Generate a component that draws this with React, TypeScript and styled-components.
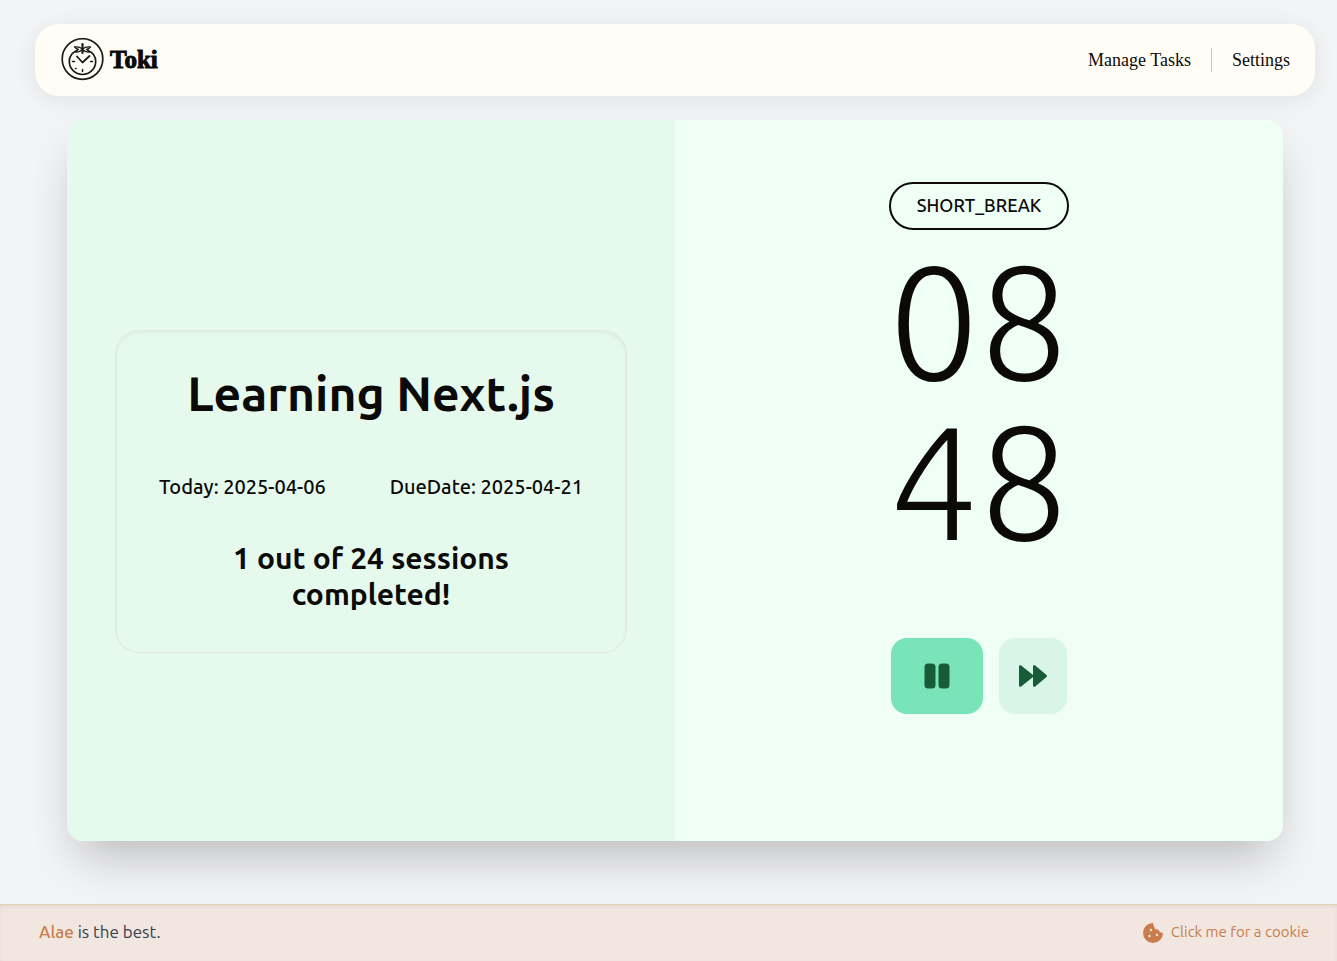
import React from "react";
import styled, { createGlobalStyle } from "styled-components";

const GlobalStyle = createGlobalStyle`
  * { box-sizing: border-box; }
  body {
    margin: 0;
    background: #f3f4f6;
    color: #0c0a09;
    font-family: Ubuntu, "Open Sans", "Noto Sans", sans-serif;
  }
  h1, h2, p { margin: 0; }
`;

const Page = styled.div`
  display: flex;
  flex-direction: column;
  min-height: 100vh;
`;

const Content = styled.div`
  flex: 1;
  display: flex;
  flex-direction: column;
  margin: 0 22px 0 35px;
  padding-top: 24px;
`;

const Header = styled.header`
  display: flex;
  align-items: center;
  justify-content: space-between;
  height: 72px;
  padding: 0 25px 0 26px;
  border-radius: 24px;
  background: #fffdf5;
  box-shadow: 0 4px 24px rgba(0, 0, 0, 0.08);
`;

const Brand = styled.a`
  display: flex;
  align-items: center;
  gap: 6px;
  color: #0c0a09;
  font: 700 25px/32px "Liberation Serif", serif;
  text-decoration: none;
  -webkit-text-stroke: 1px #0c0a09;
`;

const Nav = styled.nav`
  display: flex;
  align-items: center;
  gap: 20px;
`;

const NavLink = styled.a`
  color: #0c0a09;
  font: 18px/24px "Liberation Serif", serif;
  text-decoration: none;
`;

const Divider = styled.span`
  width: 1px;
  height: 24px;
  background: #c9c8c4;
`;

const Main = styled.main`
  flex: 1;
  display: flex;
  overflow: hidden;
  padding: 24px 32px 63px;
`;

const Card = styled.div`
  flex: 1;
  display: grid;
  grid-template-columns: 1fr 1fr;
  border-radius: 16px;
  box-shadow: 0 25px 50px -12px rgba(0, 0, 0, 0.25);
`;

const TaskPanel = styled.section`
  display: flex;
  align-items: center;
  padding: 22px 48px 0;
  border-radius: 16px 0 0 16px;
  background: #e5faed;
`;

const TaskBox = styled.div`
  flex: 1;
  display: flex;
  flex-direction: column;
  align-items: center;
  gap: 32px;
  padding: 32px 40px 40px;
  border: 1px solid #e3e4e1;
  border-radius: 24px;
  box-shadow: inset 0 2px 4px rgba(0, 0, 0, 0.05);
  text-align: center;
`;

const Title = styled.h1`
  font-size: 48px;
  font-weight: 600;
  line-height: 60px;
`;

const Dates = styled.div`
  display: flex;
  justify-content: space-between;
  gap: 64px;
  padding: 18px 0 7px;
  font-size: 20px;
  font-weight: 550;
  line-height: 28px;
`;

const Progress = styled.h2`
  max-width: 320px;
  font-size: 30px;
  font-weight: 600;
  line-height: 36px;
`;

const TimerPanel = styled.section`
  display: flex;
  flex-direction: column;
  align-items: center;
  padding: 62px 48px 48px;
  border-radius: 0 16px 16px 0;
  background: #effff5;
`;

const Mode = styled.p`
  padding: 7px 26px 9px;
  border: 2px solid #0c0a09;
  border-radius: 24px;
  font-size: 18px;
  font-weight: 500;
  line-height: 28px;
`;

const Clock = styled.div`
  display: flex;
  flex-direction: column;
  padding: 11px 0 77px;
  font-size: 160px;
  font-weight: 300;
  line-height: 160px;
`;

const Controls = styled.div`
  display: flex;
  gap: 16px;
`;

const ControlButton = styled.button<{ $primary?: boolean }>`
  display: flex;
  align-items: center;
  justify-content: center;
  width: ${(p) => (p.$primary ? 92 : 68)}px;
  height: 76px;
  padding: 0;
  border: 0;
  border-radius: 16px;
  background: ${(p) => (p.$primary ? "#79e4b7" : "#d9f4e8")};
  color: #185c37;
`;

const Footer = styled.footer`
  display: flex;
  align-items: center;
  justify-content: space-between;
  height: 57px;
  padding: 0 28px 0 39px;
  border-top: 1px solid #e2d0ba;
  background: #f1e6e0;
  box-shadow: inset 0 2px 4px rgba(0, 0, 0, 0.05);
  color: #374151;
  font-size: 17px;
  line-height: 24px;
`;

const Credit = styled.p`
  padding-bottom: 2px;
`;

const Name = styled.span`
  color: #c97d4c;
  font-weight: 500;
`;

const CookieButton = styled.button`
  display: flex;
  align-items: center;
  gap: 8px;
  padding: 0;
  border: 0;
  background: none;
  color: #c97d4c;
  font-family: inherit;
  font-size: 15px;
  line-height: 24px;
`;

const CookieLabel = styled.span`
  padding-bottom: 2px;
`;

function TomatoClock() {
  return (
    <svg width="43" height="44" viewBox="0 0 43 44" fill="none" stroke="#1c1b1a" strokeLinecap="round" strokeLinejoin="round" aria-hidden="true">
      <circle cx="21.5" cy="21" r="20.300" strokeWidth="1.700" />
      <path d="M16 12.500C11 14.500 8.300 18.500 8.300 23.500a13.200 13 0 0 0 26.400 0c0-5-2.700-9-7.700-11" strokeWidth="1.700" />
      <path d="M21.500 6v9" strokeWidth="2.200" />
      <path d="M21.500 11c-2.500-2-5-2.500-8-2 1.500 1.500 2.500 2 4 2.300-1.500.5-2.500 1.500-3 2.700 3 .5 5-.5 7-2.500M21.500 11c2.500-2 5-2.500 8-2-1.500 1.500-2.500 2-4 2.300 1.500.5 2.500 1.500 3 2.700-3 .5-5-.5-7-2.500" strokeWidth="1.300" />
      <path d="M16 18.500l5.500 6 7-6.500" strokeWidth="1.800" />
      <path d="M11.500 23.500h2M29.500 23.500h2M21.500 31.500v2M14.500 30.500h.5" strokeWidth="1.500" />
    </svg>
  );
}

function PauseIcon() {
  return (
    <svg width="26" height="26" viewBox="0 0 26 26" fill="currentColor" aria-hidden="true">
      <rect x="0.500" y="0.500" width="11" height="25" rx="3.500" />
      <rect x="14.500" y="0.500" width="11" height="25" rx="3.500" />
    </svg>
  );
}

function ForwardIcon() {
  return (
    <svg width="28" height="22" viewBox="0 0 28 22" fill="currentColor" aria-hidden="true">
      <path d="M0 1.500v19c0 1.200 1.300 1.700 2.200.9L14 12v8.500c0 1.200 1.300 1.700 2.200.9l11.300-9.400c.6-.5.6-1.500 0-2L16.200.6C15.300-.2 14 .3 14 1.500V10L2.200.6C1.300-.2 0 .3 0 1.500z" />
    </svg>
  );
}

function CookieIcon() {
  return (
    <svg width="20" height="20" viewBox="0 0 20 20" aria-hidden="true">
      <path
        fill="currentColor"
        d="M10.300 0A10 10 0 1 0 20 9.700c-2.200.3-3.900-.8-4.300-3-2.700.3-4.800-1.100-4.500-3.700C10.200 2.300 9.900 1 10.300 0z"
      />
      <g fill="#f1e6e0">
        <circle cx="8" cy="7" r="1.200" />
        <circle cx="6.500" cy="13" r="1.200" />
        <circle cx="14" cy="12" r="1.200" />
      </g>
    </svg>
  );
}

export default function App() {
  return (
    <Page>
      <GlobalStyle />
      <Content>
        <Header>
          <Brand href="#">
            <TomatoClock />
            Toki
          </Brand>
          <Nav>
            <NavLink href="#tasks">Manage Tasks</NavLink>
            <Divider />
            <NavLink href="#settings">Settings</NavLink>
          </Nav>
        </Header>
        <Main>
          <Card>
            <TaskPanel>
              <TaskBox>
                <Title>Learning Next.js</Title>
                <Dates>
                  <span>Today: 2025-04-06</span>
                  <span>DueDate: 2025-04-21</span>
                </Dates>
                <Progress>1 out of 24 sessions completed!</Progress>
              </TaskBox>
            </TaskPanel>
            <TimerPanel>
              <Mode>SHORT_BREAK</Mode>
              <Clock>
                <span>08</span>
                <span>48</span>
              </Clock>
              <Controls>
                <ControlButton $primary aria-label="Pause">
                  <PauseIcon />
                </ControlButton>
                <ControlButton aria-label="Skip">
                  <ForwardIcon />
                </ControlButton>
              </Controls>
            </TimerPanel>
          </Card>
        </Main>
      </Content>
      <Footer>
        <Credit>
          <Name>Alae</Name> is the best.
        </Credit>
        <CookieButton>
          <CookieIcon />
          <CookieLabel>Click me for a cookie</CookieLabel>
        </CookieButton>
      </Footer>
    </Page>
  );
}
